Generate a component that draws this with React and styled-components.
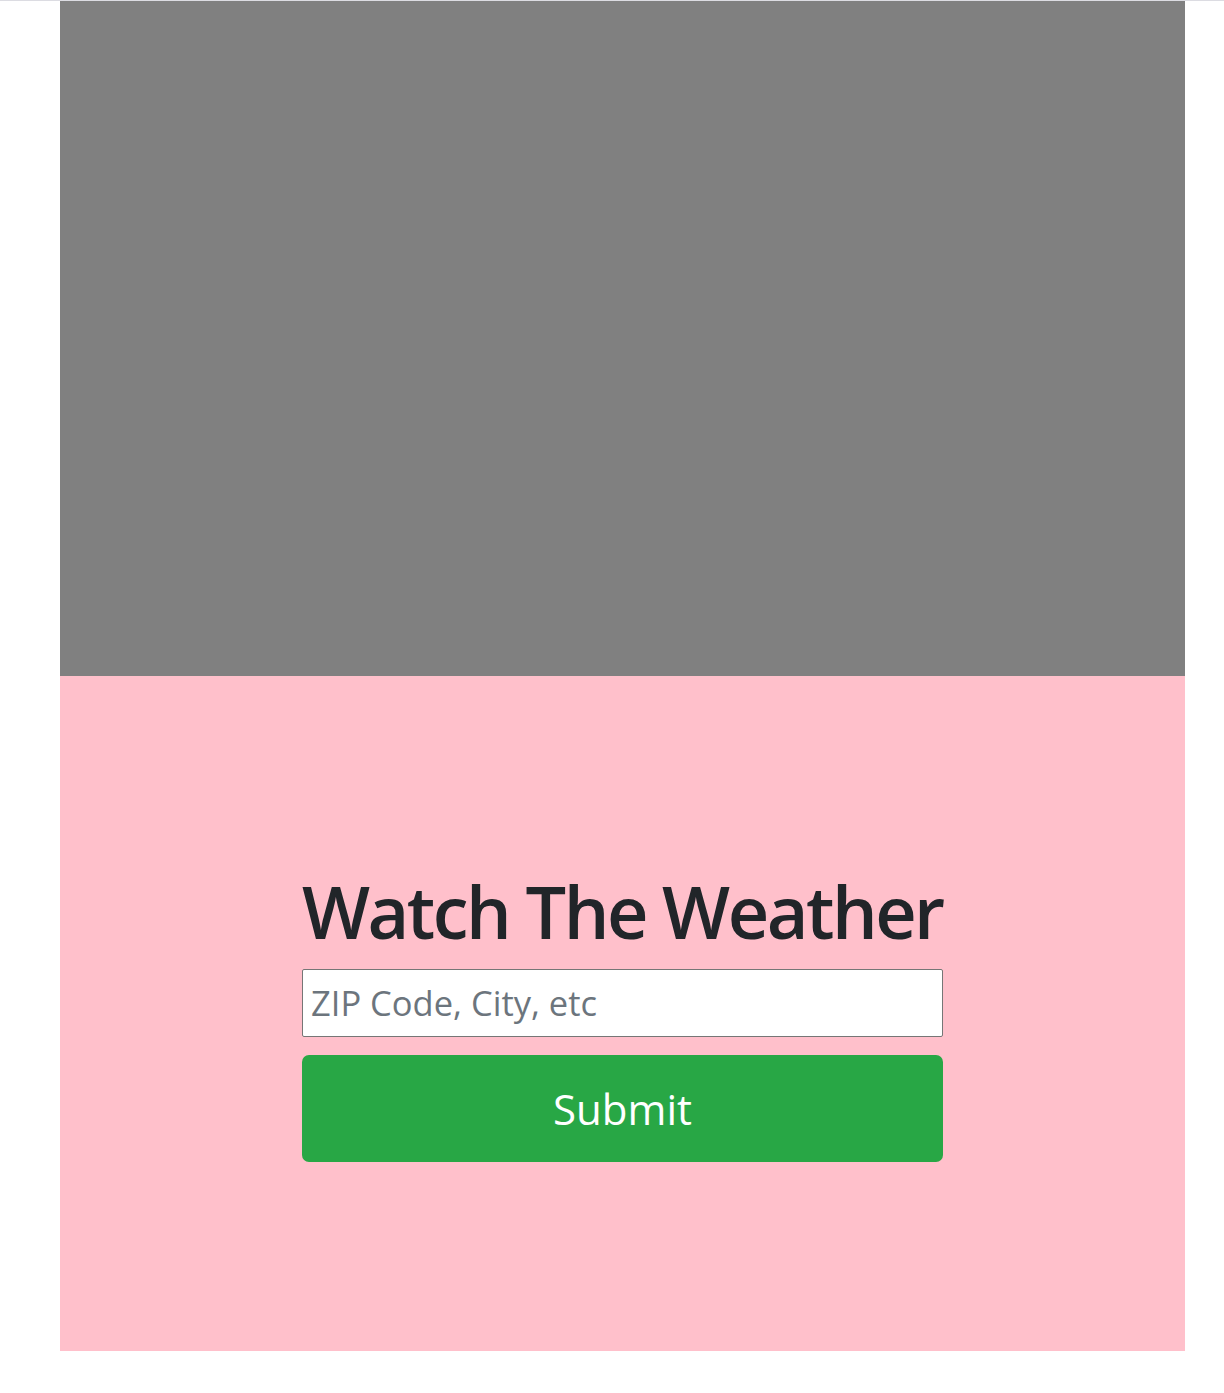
import React from "react";
import styled, { createGlobalStyle } from "styled-components";

const Global = createGlobalStyle`
  html, body { margin: 0; padding: 0; background: #fff; }
  body { font-family: "Open Sans", "Noto Sans", sans-serif; border-top: 1px solid #dcdce2; }
  * { box-sizing: border-box; }
`;

const Frame = styled.div`
  width: 1125px;
  margin-left: 60px;
  display: flex;
  flex-direction: column;
  padding-bottom: 42px;
`;

const Panel = styled.section`
  height: 675px;
  background: ${(p) => p.$bg};
  display: flex;
  align-items: center;
  justify-content: center;
`;

const Form = styled.form`
  width: 641px;
  display: flex;
  flex-direction: column;
  margin-top: 7px;
`;

const Title = styled.h1`
  margin: 0 0 17px;
  font-size: 72px;
  font-weight: 600;
  line-height: 1.1;
  color: #212529;
  letter-spacing: -2.5px;
  white-space: nowrap;
`;

const Input = styled.input`
  height: 68px;
  border: 1px solid #767676;
  border-radius: 2px;
  background: #fff;
  padding: 0 8px;
  font-family: inherit;
  font-size: 34.5px;
  color: #212529;
  outline: none;
  &::placeholder { color: #6c757d; opacity: 1; }
`;

const Button = styled.button`
  margin-top: 18px;
  height: 107px;
  border: none;
  border-radius: 7px;
  background: #28a745;
  color: #fff;
  font-family: inherit;
  font-size: 42px;
  cursor: pointer;
`;

export default function App() {
  return (
    <>
      <Global />
      <Frame>
        <Panel $bg="#808080" />
        <Panel $bg="#ffc0cb">
          <Form onSubmit={(e) => e.preventDefault()}>
            <Title>Watch The Weather</Title>
            <Input placeholder="ZIP Code, City, etc" />
            <Button type="submit">Submit</Button>
          </Form>
        </Panel>
      </Frame>
    </>
  );
}
